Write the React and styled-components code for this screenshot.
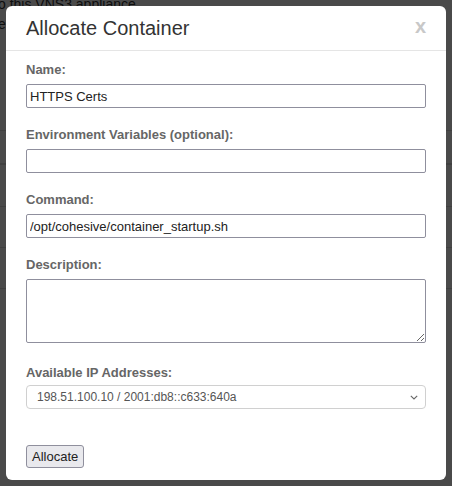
import React from 'react';
import styled, { createGlobalStyle } from 'styled-components';

const GlobalStyle = createGlobalStyle`
	html, body {
		margin: 0;
		padding: 0;
		background: #fff;
		font-family: "Liberation Sans", Arial, sans-serif;
		color: #333;
	}
`;

const rows = [131, 165, 207, 248, 289];

function App() {
	return (
		<>
			<GlobalStyle />
			<Page>
				<PageText>o this VNS3 appliance.</PageText>
				<PageText>e</PageText>
				<Table>
					{rows.map((top, i) => (
						<TableRow key={top} $height={i === 0 ? 131 - 40 : top - rows[i - 1]} $thick={i === 1} />
					))}
				</Table>
			</Page>
			<Overlay>
				<Modal>
					<Header>
						<Title>Allocate Container</Title>
						<Close type="button">x</Close>
					</Header>
					<Body>
						<Group>
							<Label>Name:</Label>
							<Input defaultValue="HTTPS Certs" />
						</Group>
						<Group>
							<Label>Environment Variables (optional):</Label>
							<Input defaultValue="" />
						</Group>
						<Group>
							<Label>Command:</Label>
							<Input defaultValue="/opt/cohesive/container_startup.sh" />
						</Group>
						<Group $space={21}>
							<Label>Description:</Label>
							<TextArea />
						</Group>
						<Group $space={36}>
							<Label $gap={3}>Available IP Addresses:</Label>
							<SelectWrap>
								<Select defaultValue="a">
									<option value="a">198.51.100.10 / 2001:db8::c633:640a</option>
								</Select>
								<Chevron width="8" height="5" viewBox="0 0 8 5">
									<path d="M0.8 0.8 L4 4 L7.2 0.8" fill="none" stroke="#666" strokeWidth="1.1" />
								</Chevron>
							</SelectWrap>
						</Group>
						<Button type="button">Allocate</Button>
					</Body>
				</Modal>
			</Overlay>
		</>
	);
}

const Page = styled.div`
	min-height: 486px;
	font-size: 14px;
`;

const PageText = styled.div`
	line-height: 20px;
	margin-top: -6px;
	margin-bottom: 6px;
	text-indent: -2px;
	&:last-of-type {
		margin-top: 0;
	}
`;

const Table = styled.div`
	display: flex;
	flex-direction: column;
`;

const TableRow = styled.div`
	height: ${p => p.$height - (p.$thick ? 2 : 1)}px;
	border-bottom: ${p => (p.$thick ? 2 : 1)}px solid #ddd;
`;

// backdrop over the page
const Overlay = styled.div`
	position: fixed;
	inset: 0;
	background: rgba(0, 0, 0, 0.71);
	display: flex;
	justify-content: center;
	align-items: flex-start;
	padding-top: 6px;
`;

const Modal = styled.div`
	width: 440px;
	background: #fff;
	border-radius: 6px;
	box-sizing: border-box;
`;

const Header = styled.div`
	display: flex;
	align-items: center;
	justify-content: space-between;
	padding: 11px 20px;
	border-bottom: 1px solid #e5e5e5;
`;

const Title = styled.h4`
	margin: 0;
	font-size: 20px;
	line-height: 22px;
	font-weight: normal;
	color: #333;
`;

const Close = styled.button`
	border: 0;
	background: none;
	padding: 0;
	margin-top: -5px;
	font-family: "Liberation Sans", Arial, sans-serif;
	font-size: 20px;
	font-weight: bold;
	line-height: 20px;
	color: #c8c8c8;
`;

const Body = styled.div`
	padding: 10px 20px 12px;
`;

const Group = styled.div`
	margin-bottom: ${p => p.$space ?? 18}px;
`;

const Label = styled.label`
	display: block;
	font-size: 13px;
	line-height: 18px;
	font-weight: bold;
	color: #666;
	margin-bottom: ${p => p.$gap ?? 5}px;
`;

const Input = styled.input`
	display: block;
	box-sizing: border-box;
	width: 100%;
	height: 24px;
	margin: 0;
	padding: 1px 3px;
	border: 1px solid #8f8f9d;
	border-radius: 2px;
	font-family: "Liberation Sans", Arial, sans-serif;
	font-size: 13px;
	color: #222;
	background: #fff;
`;

const TextArea = styled.textarea`
	display: block;
	box-sizing: border-box;
	width: 100%;
	height: 64px;
	margin: 0;
	padding: 2px 3px;
	border: 1px solid #8f8f9d;
	border-radius: 2px;
	font-family: "Liberation Sans", Arial, sans-serif;
	font-size: 13px;
`;

const SelectWrap = styled.div`
	position: relative;
`;

const Select = styled.select`
	display: block;
	box-sizing: border-box;
	width: 100%;
	height: 24px;
	margin: 0;
	padding: 0 10px;
	border: 1px solid #d0d0d0;
	border-radius: 4px;
	background: #fff;
	appearance: none;
	font-family: "Liberation Sans", Arial, sans-serif;
	font-size: 12px;
	color: #555;
`;

const Chevron = styled.svg`
	position: absolute;
	right: 8px;
	top: 10px;
	pointer-events: none;
`;

const Button = styled.button`
	display: block;
	height: 23px;
	padding: 0 5px;
	border: 1px solid #8f8f9d;
	border-radius: 3px;
	background: #e9e9ed;
	font-family: "Liberation Sans", Arial, sans-serif;
	font-size: 13px;
	color: #222;
`;

export default App;
